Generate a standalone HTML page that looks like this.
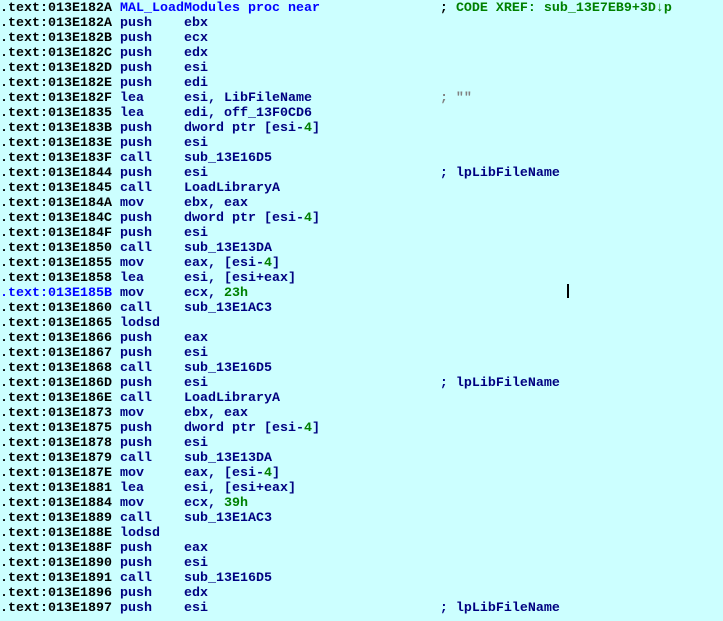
<!DOCTYPE html><html><head><style>
body{margin:0;background:#ccffff;width:723px;height:621px;overflow:hidden}
pre{margin:0;padding:1px 0 0 0;font-family:"Liberation Mono","DejaVu Sans Mono",monospace;font-weight:bold;font-size:13.33px;line-height:15px;color:#000;white-space:pre}
.m{color:#000080}.l{color:#0000ff}.c{color:#008000}.n{color:#008000}.g{color:#808080}
#cur{position:absolute;left:567px;top:284px;width:2px;height:14px;background:#000}
</style></head><body><pre>.text:013E182A <span class="l">MAL_LoadModules proc near</span>               ; <span class="c">CODE XREF: sub_13E7EB9+3D↓p</span>
.text:013E182A <span class="m">push    ebx</span>
.text:013E182B <span class="m">push    ecx</span>
.text:013E182C <span class="m">push    edx</span>
.text:013E182D <span class="m">push    esi</span>
.text:013E182E <span class="m">push    edi</span>
.text:013E182F <span class="m">lea     esi, LibFileName</span>                <span class="g">; ""</span>
.text:013E1835 <span class="m">lea     edi, off_13F0CD6</span>
.text:013E183B <span class="m">push    dword ptr [esi-<span class="n">4</span>]</span>
.text:013E183E <span class="m">push    esi</span>
.text:013E183F <span class="m">call    sub_13E16D5</span>
.text:013E1844 <span class="m">push    esi</span>                             <span class="m">; lpLibFileName</span>
.text:013E1845 <span class="m">call    LoadLibraryA</span>
.text:013E184A <span class="m">mov     ebx, eax</span>
.text:013E184C <span class="m">push    dword ptr [esi-<span class="n">4</span>]</span>
.text:013E184F <span class="m">push    esi</span>
.text:013E1850 <span class="m">call    sub_13E13DA</span>
.text:013E1855 <span class="m">mov     eax, [esi-<span class="n">4</span>]</span>
.text:013E1858 <span class="m">lea     esi, [esi+eax]</span>
<span class="l">.text:013E185B</span> <span class="m">mov     ecx, <span class="n">23h</span></span>
.text:013E1860 <span class="m">call    sub_13E1AC3</span>
.text:013E1865 <span class="m">lodsd</span>
.text:013E1866 <span class="m">push    eax</span>
.text:013E1867 <span class="m">push    esi</span>
.text:013E1868 <span class="m">call    sub_13E16D5</span>
.text:013E186D <span class="m">push    esi</span>                             <span class="m">; lpLibFileName</span>
.text:013E186E <span class="m">call    LoadLibraryA</span>
.text:013E1873 <span class="m">mov     ebx, eax</span>
.text:013E1875 <span class="m">push    dword ptr [esi-<span class="n">4</span>]</span>
.text:013E1878 <span class="m">push    esi</span>
.text:013E1879 <span class="m">call    sub_13E13DA</span>
.text:013E187E <span class="m">mov     eax, [esi-<span class="n">4</span>]</span>
.text:013E1881 <span class="m">lea     esi, [esi+eax]</span>
.text:013E1884 <span class="m">mov     ecx, <span class="n">39h</span></span>
.text:013E1889 <span class="m">call    sub_13E1AC3</span>
.text:013E188E <span class="m">lodsd</span>
.text:013E188F <span class="m">push    eax</span>
.text:013E1890 <span class="m">push    esi</span>
.text:013E1891 <span class="m">call    sub_13E16D5</span>
.text:013E1896 <span class="m">push    edx</span>
.text:013E1897 <span class="m">push    esi</span>                             <span class="m">; lpLibFileName</span>
</pre><div id="cur"></div></body></html>
